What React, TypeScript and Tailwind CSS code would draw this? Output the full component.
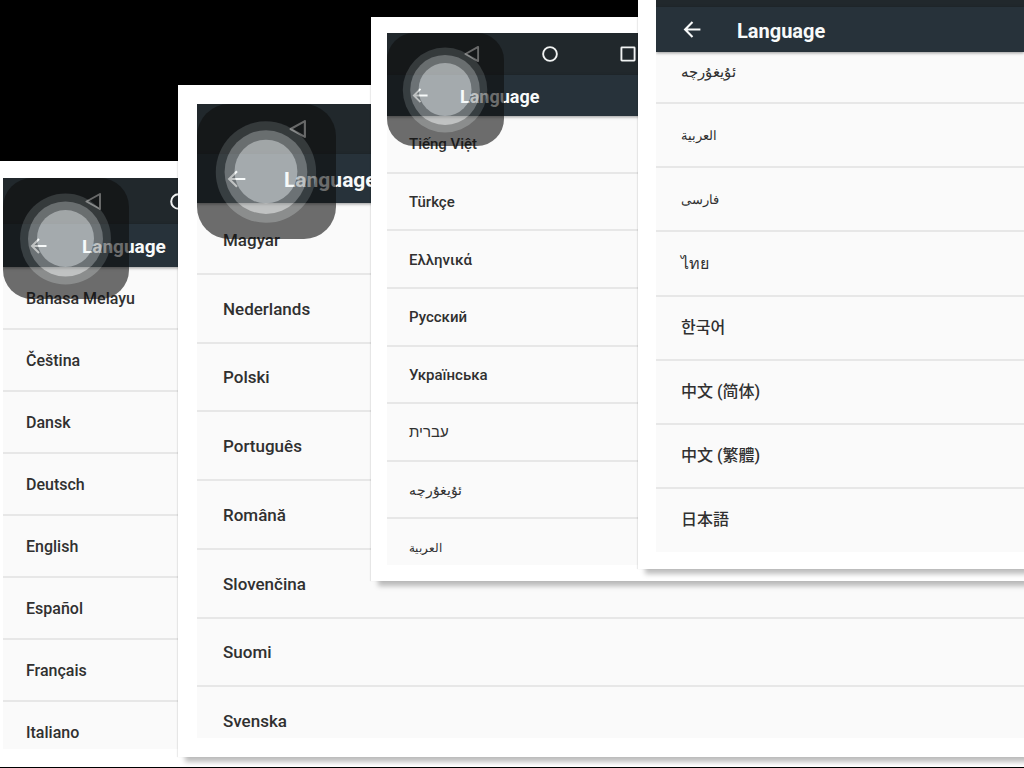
import React from "react";

type Language = { name: string; lang: string; style?: string };

type PanelProps = {
  frame: string;
  screen: string;
  nav: string;
  navIcon: string;
  bar: string;
  backIcon: string;
  title: string;
  list: string;
  row: string;
  overlay?: string;
  showNav?: boolean;
  languages: Language[];
};

const panels: PanelProps[] = [
  {
    frame: "left-0 top-[161px] pt-[17px] pb-[18px] pl-[3px]",
    screen: "h-[571px]",
    nav: "h-[46px] pl-[82px] gap-[68px]",
    navIcon: "size-[17px]",
    bar: "h-[43px] pl-[27px] gap-[34px]",
    backIcon: "size-[18px]",
    title: "text-[19px]",
    list: "h-[496px] mt-px",
    row: "pl-[23px] text-[16px]",
    overlay: "w-[126px] h-[121px]",
    showNav: true,
    languages: [
      { name: "Bahasa Melayu", lang: "ms" },
      { name: "Čeština", lang: "cs" },
      { name: "Dansk", lang: "da" },
      { name: "Deutsch", lang: "de" },
      { name: "English", lang: "en" },
      { name: "Español", lang: "es" },
      { name: "Français", lang: "fr" },
      { name: "Italiano", lang: "it" },
    ],
  },
  {
    frame: "left-[178px] top-[85px] pt-[19px] pb-[19px] pl-[19px]",
    screen: "h-[634px]",
    nav: "h-[50px] pl-[92px] gap-[76px]",
    navIcon: "size-[18px]",
    bar: "h-[49px] pl-[30px] gap-[37px]",
    backIcon: "size-[20px]",
    title: "text-[21px]",
    list: "h-[550px] mt-[3px]",
    row: "pl-[26px] text-[17px]",
    overlay: "w-[139px] h-[135px]",
    showNav: true,
    languages: [
      { name: "Magyar", lang: "hu" },
      { name: "Nederlands", lang: "nl" },
      { name: "Polski", lang: "pl" },
      { name: "Português", lang: "pt" },
      { name: "Română", lang: "ro" },
      { name: "Slovenčina", lang: "sk" },
      { name: "Suomi", lang: "fi" },
      { name: "Svenska", lang: "sv" },
    ],
  },
  {
    frame: "left-[371px] top-[17px] p-4 pr-0",
    screen: "h-[532px]",
    nav: "h-[42px] pl-[77px] gap-[62px]",
    navIcon: "size-[16px]",
    bar: "h-[41px] pl-[25px] gap-[31px]",
    backIcon: "size-[17px]",
    title: "text-[18px]",
    list: "h-[461px]",
    row: "pl-[22px] text-[15px]",
    overlay: "w-[117px] h-[113px]",
    showNav: true,
    languages: [
      { name: "Tiếng Việt", lang: "vi" },
      { name: "Türkçe", lang: "tr" },
      { name: "Ελληνικά", lang: "el" },
      { name: "Русский", lang: "ru" },
      { name: "Українська", lang: "uk" },
      { name: "עברית", lang: "he" },
      { name: "ئۇيغۇرچە", lang: "ug", style: "text-[14px]" },
      { name: "العربية", lang: "ar", style: "text-[12px]" },
    ],
  },
  {
    frame: "left-[638px] top-0 pb-[17px] pl-[18px]",
    screen: "h-[552px]",
    nav: "h-[7px]",
    navIcon: "",
    bar: "h-[45px] pl-[27px] gap-[35px]",
    backIcon: "size-[19px]",
    title: "text-[20px]",
    list: "h-[513px] -mt-3",
    row: "pl-[25px] text-[16px]",
    languages: [
      { name: "ئۇيغۇرچە", lang: "ug", style: "text-[15px]" },
      { name: "العربية", lang: "ar", style: "text-[13px]" },
      { name: "فارسی", lang: "fa", style: "text-[13px]" },
      { name: "ไทย", lang: "th" },
      { name: "한국어", lang: "ko" },
      { name: "中文 (简体)", lang: "zh-Hans" },
      { name: "中文 (繁體)", lang: "zh-Hant" },
      { name: "日本語", lang: "ja" },
    ],
  },
];

function NavButtons({ size }: { size: string }) {
  const shapes = [
    { label: "Back", shape: <path d="M15 1v15L1.5 8.5z" strokeLinejoin="round" /> },
    { label: "Home", shape: <circle cx="8.5" cy="8.5" r="7.3" /> },
    { label: "Recents", shape: <rect x="1.5" y="1.5" width="14" height="14" rx="0.5" /> },
  ];
  return (
    <>
      {shapes.map(({ label, shape }) => (
        <button key={label} type="button" aria-label={label} className="shrink-0">
          <svg viewBox="0 0 17 17" fill="none" stroke="#f1f3f3" strokeWidth="2" className={size}>
            {shape}
          </svg>
        </button>
      ))}
    </>
  );
}

function AssistiveTouch({ size }: { size: string }) {
  return (
    <svg
      viewBox="0 0 126 121"
      preserveAspectRatio="none"
      className={`pointer-events-none absolute left-0 top-0 z-20 opacity-[0.6] ${size}`}
    >
      <rect width="126" height="121" rx="29" fill="#0e0e0e" />
      <circle cx="62.5" cy="61" r="45.5" fill="#434646" />
      <circle cx="62.5" cy="61" r="37.5" fill="#9a9d9d" />
      <circle cx="62.5" cy="60.5" r="28.5" fill="#f7fafa" />
    </svg>
  );
}

function Panel(p: PanelProps) {
  return (
    <section
      aria-label="Language"
      className={`absolute right-0 isolate bg-white shadow-[-1px_0_1px_rgba(0,0,0,0.08),6px_6px_5px_-1px_rgba(0,0,0,0.26)] ${p.frame}`}
    >
      <div className={`relative overflow-hidden bg-[#fafafa] ${p.screen}`}>
        <div className={`relative z-10 flex items-center bg-[#21282c] ${p.nav}`}>
          {p.showNav && <NavButtons size={p.navIcon} />}
        </div>
        <header
          className={`relative z-10 flex items-center bg-[#27323a] text-[#f8fafa] shadow-[0_1px_3px_rgba(0,0,0,0.4)] ${p.bar}`}
        >
          <button type="button" aria-label="Navigate up" className="shrink-0">
            <svg viewBox="0 0 18 18" fill="none" stroke="currentColor" strokeWidth="2" className={p.backIcon}>
              <path d="M16.5 9H2.2M9 2 2 9l7 7" />
            </svg>
          </button>
          <h1 className={`pt-0.5 font-bold leading-6 ${p.title}`}>Language</h1>
        </header>
        <ul className={`grid auto-rows-fr ${p.list}`}>
          {p.languages.map((l) => (
            <li
              key={l.lang}
              className={`flex min-h-0 border-b-2 border-[#e7e7e7] last:border-transparent ${p.row}`}
            >
              <button
                type="button"
                lang={l.lang}
                className={`w-full pt-px text-left font-medium leading-6 text-[#303030] ${l.style ?? ""}`}
              >
                {l.name}
              </button>
            </li>
          ))}
        </ul>
        {p.overlay && <AssistiveTouch size={p.overlay} />}
      </div>
    </section>
  );
}

export default function App() {
  return (
    <main className="relative h-screen overflow-hidden bg-black font-['Roboto','Noto_Sans','Noto_Sans_CJK_SC',sans-serif]">
      {panels.map((p, i) => (
        <Panel key={i} {...p} />
      ))}
    </main>
  );
}
